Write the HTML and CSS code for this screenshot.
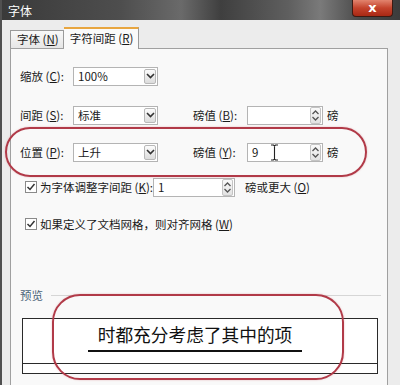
FILE: index.html
```html
<!DOCTYPE html>
<html lang="zh-CN">
<head>
    <meta charset="UTF-8">
    <meta name="viewport" content="width=device-width, initial-scale=1.0">
    <title>字体</title>
    <link rel="stylesheet" href="styles.css">
</head>
<body>
    <div class="window">
        <div class="titlebar">
            <span class="title">字体</span>
            <button class="close">x</button>
        </div>
        <div class="client">
            <div class="tabs">
                <div class="tab">字体 (<u>N</u>)</div>
                <div class="tab active">字符间距 (<u>R</u>)</div>
            </div>
            <div class="panel">
                <div class="row row-1">
                    <span class="label">缩放 (<u>C</u>):</span>
                    <div class="combo"><span class="value">100%</span><span class="drop"><svg width="9" height="6" viewBox="0 0 9 6"><path d="M1 1 L4.5 4.5 L8 1" fill="none" stroke="#333" stroke-width="1.6"/></svg></span></div>
                </div>
                <div class="row row-2">
                    <span class="label">间距 (<u>S</u>):</span>
                    <div class="combo"><span class="value">标准</span><span class="drop"><svg width="9" height="6" viewBox="0 0 9 6"><path d="M1 1 L4.5 4.5 L8 1" fill="none" stroke="#333" stroke-width="1.6"/></svg></span></div>
                    <span class="label label-2">磅值 (<u>B</u>):</span>
                    <div class="spin"><span class="value"></span><span class="arrows"><svg width="9" height="15" viewBox="0 0 9 15"><path d="M1.5 6 L4.5 3 L7.5 6 M1.5 9 L4.5 12 L7.5 9" fill="none" stroke="#555" stroke-width="1.3"/></svg></span></div>
                    <span class="unit">磅</span>
                </div>
                <div class="row row-3">
                    <span class="label">位置 (<u>P</u>):</span>
                    <div class="combo"><span class="value">上升</span><span class="drop"><svg width="9" height="6" viewBox="0 0 9 6"><path d="M1 1 L4.5 4.5 L8 1" fill="none" stroke="#333" stroke-width="1.6"/></svg></span></div>
                    <span class="label label-2">磅值 (<u>Y</u>):</span>
                    <div class="spin"><span class="value">9</span><svg class="ibeam" width="9" height="17" viewBox="0 0 9 17"><path d="M1 1 H3.5 L4.5 2 L5.5 1 H8 M4.5 2 V15 M1 16 H3.5 L4.5 15 L5.5 16 H8" fill="none" stroke="#222" stroke-width="1.1"/></svg><span class="arrows"><svg width="9" height="15" viewBox="0 0 9 15"><path d="M1.5 6 L4.5 3 L7.5 6 M1.5 9 L4.5 12 L7.5 9" fill="none" stroke="#555" stroke-width="1.3"/></svg></span></div>
                    <span class="unit">磅</span>
                </div>
                <div class="row row-4">
                    <span class="check"><svg width="10" height="10" viewBox="0 0 10 10"><path d="M1.5 5 L4 7.5 L8.5 2" fill="none" stroke="#333" stroke-width="1.5"/></svg></span>
                    <span class="check-label">为字体调整字间距 (<u>K</u>):</span>
                    <div class="spin spin-small"><span class="value">1</span><span class="arrows"><svg width="9" height="15" viewBox="0 0 9 15"><path d="M1.5 6 L4.5 3 L7.5 6 M1.5 9 L4.5 12 L7.5 9" fill="none" stroke="#555" stroke-width="1.3"/></svg></span></div>
                    <span class="unit unit-wide">磅或更大 (<u>O</u>)</span>
                </div>
                <div class="row row-5">
                    <span class="check"><svg width="10" height="10" viewBox="0 0 10 10"><path d="M1.5 5 L4 7.5 L8.5 2" fill="none" stroke="#333" stroke-width="1.5"/></svg></span>
                    <span class="check-label">如果定义了文档网格，则对齐网格 (<u>W</u>)</span>
                </div>
                <div class="group">
                    <span class="group-title">预览</span>
                    <span class="group-line"></span>
                </div>
                <div class="preview">
                    <div class="preview-text">时都充分考虑了其中的项</div>
                    <div class="preview-rule"></div>
                    <div class="preview-strip"></div>
                </div>
            </div>
        </div>
        <div class="mark mark-1"></div>
        <div class="mark mark-2"></div>
    </div>
</body>
</html>
```

FILE: styles.css
```css
* {
    box-sizing: border-box;
    font-family: "Noto Sans CJK SC", "DejaVu Sans", sans-serif;
}

body {
    margin: 0;
    width: 400px;
    height: 385px;
    overflow: hidden;
    background-color: #555;
}

u {
    text-decoration: underline;
    text-underline-offset: 1px;
}

.window {
    position: relative;
    width: 400px;
    height: 385px;
    border-left: 2px solid #505050;
    background-color: #ececec;
    overflow: hidden;
}

.titlebar {
    display: flex;
    justify-content: space-between;
    align-items: flex-start;
    height: 20px;
    padding: 0 7px 0 6px;
    background: linear-gradient(90deg, #3a3a3a 0%, #4e4e4e 30%, #6a6a6a 45%, #3f3f3f 55%, #5f5f5f 72%, #7a7a7a 80%, #4a4a4a 90%, #3c3c3c 100%);
}

.title {
    color: #fff;
    font-size: 12px;
    line-height: 22px;
}

.close {
    width: 41px;
    height: 17px;
    padding: 0;
    border: 1px solid #3e1a12;
    border-top: none;
    border-radius: 0 0 4px 4px;
    background: linear-gradient(#e2846e, #c4432c 50%, #a82814);
    color: #fff;
    font-size: 13px;
    font-weight: bold;
    line-height: 14px;
    font-family: "DejaVu Sans", sans-serif;
}

.client {
    padding: 7px 0 0 8px;
}

.tabs {
    display: flex;
    align-items: flex-end;
    height: 21px;
    position: relative;
    z-index: 1;
}

.tab {
    flex-shrink: 0;
    height: 18px;
    padding: 0 4px 0 6px;
    border: 1px solid #9a9a9a;
    border-bottom: none;
    background: linear-gradient(#f8f8f8, #e6e6e6);
    color: #1a1a1a;
    font-size: 11.5px;
    line-height: 17px;
    white-space: nowrap;
}

.tab.active {
    height: 22px;
    margin-bottom: -1px;
    padding: 0 5px 0 6px;
    border-left: none;
    border-top: 2px solid #e8a640;
    background: #fafafa;
    line-height: 19px;
}

.panel {
    width: 378px;
    height: 360px;
    border: 1px solid #a0a0a0;
    background-color: #f9f9f9;
    padding: 17px 0 0 9px;
}

.row {
    display: flex;
    align-items: center;
    height: 20px;
    font-size: 11.5px;
    color: #1a1a1a;
}

.row-2 { margin-top: 19px; }
.row-3 { margin-top: 17px; }
.row-4 { margin-top: 15px; }
.row-5 { margin-top: 17px; }

.label {
    width: 53px;
    white-space: nowrap;
}

.label-2 {
    margin-left: 35px;
    width: 54px;
}

.combo,
.spin {
    display: flex;
    align-items: center;
    justify-content: space-between;
    height: 19px;
    border: 1px solid #b4b4b4;
    background: #fff;
    padding: 0 1px 0 4px;
}

.combo {
    width: 85px;
}

.spin {
    width: 76px;
    position: relative;
}

.spin-small {
    width: 82px;
}

.value {
    flex: 1;
    font-size: 11.5px;
}

.drop {
    display: flex;
    align-items: center;
    justify-content: center;
    width: 12px;
    height: 15px;
    border: 1px solid #b8b8b8;
    border-radius: 2px;
    background: linear-gradient(#fcfcfc, #dcdcdc);
}

.arrows {
    display: flex;
    align-items: center;
    justify-content: center;
    width: 11px;
    height: 17px;
    border: 1px solid #c4c4c4;
    border-radius: 2px;
    background: linear-gradient(#fafafa, #e2e2e2);
}

.ibeam {
    position: absolute;
    left: 22px;
    top: 0;
}

.unit {
    margin-left: 4px;
}

.unit-wide {
    margin-left: 10px;
}

.check {
    display: flex;
    align-items: center;
    justify-content: center;
    width: 12px;
    height: 12px;
    margin-left: 5px;
    border: 1px solid #8a8a8a;
    background: #fff;
}

.check-label {
    margin-left: 3px;
    white-space: nowrap;
}

.group {
    display: flex;
    align-items: center;
    margin-top: 53px;
    height: 16px;
}

.group-title {
    color: #4a6478;
    font-size: 11.5px;
}

.group-line {
    flex: 1;
    height: 1px;
    margin: 0 6px 0 8px;
    background: #d6d6d6;
}

.preview {
    width: 356px;
    height: 56px;
    margin: 15px 0 0 2px;
    border: 1px solid #2a2a2a;
    background: #fff;
    display: flex;
    flex-direction: column;
    align-items: center;
    padding-right: 10px;
}

.preview-text {
    margin-top: 3px;
    font-size: 17.7px;
    line-height: 24px;
    color: #111;
}

.preview-rule {
    width: 214px;
    height: 2px;
    margin-top: 4px;
    background: #111;
}

.preview-strip {
    align-self: stretch;
    margin: 11px -10px 0 0;
    height: 1px;
    background: #2a2a2a;
}

.mark {
    position: absolute;
    border: 2px solid #b13a48;
    box-shadow: 0 0 2px rgba(200, 80, 90, 0.4);
}

.mark-1 {
    left: 3px;
    top: 127px;
    width: 362px;
    height: 50px;
    border-radius: 26px;
}

.mark-2 {
    left: 50px;
    top: 294px;
    width: 292px;
    height: 86px;
    border-radius: 28px;
}
```
